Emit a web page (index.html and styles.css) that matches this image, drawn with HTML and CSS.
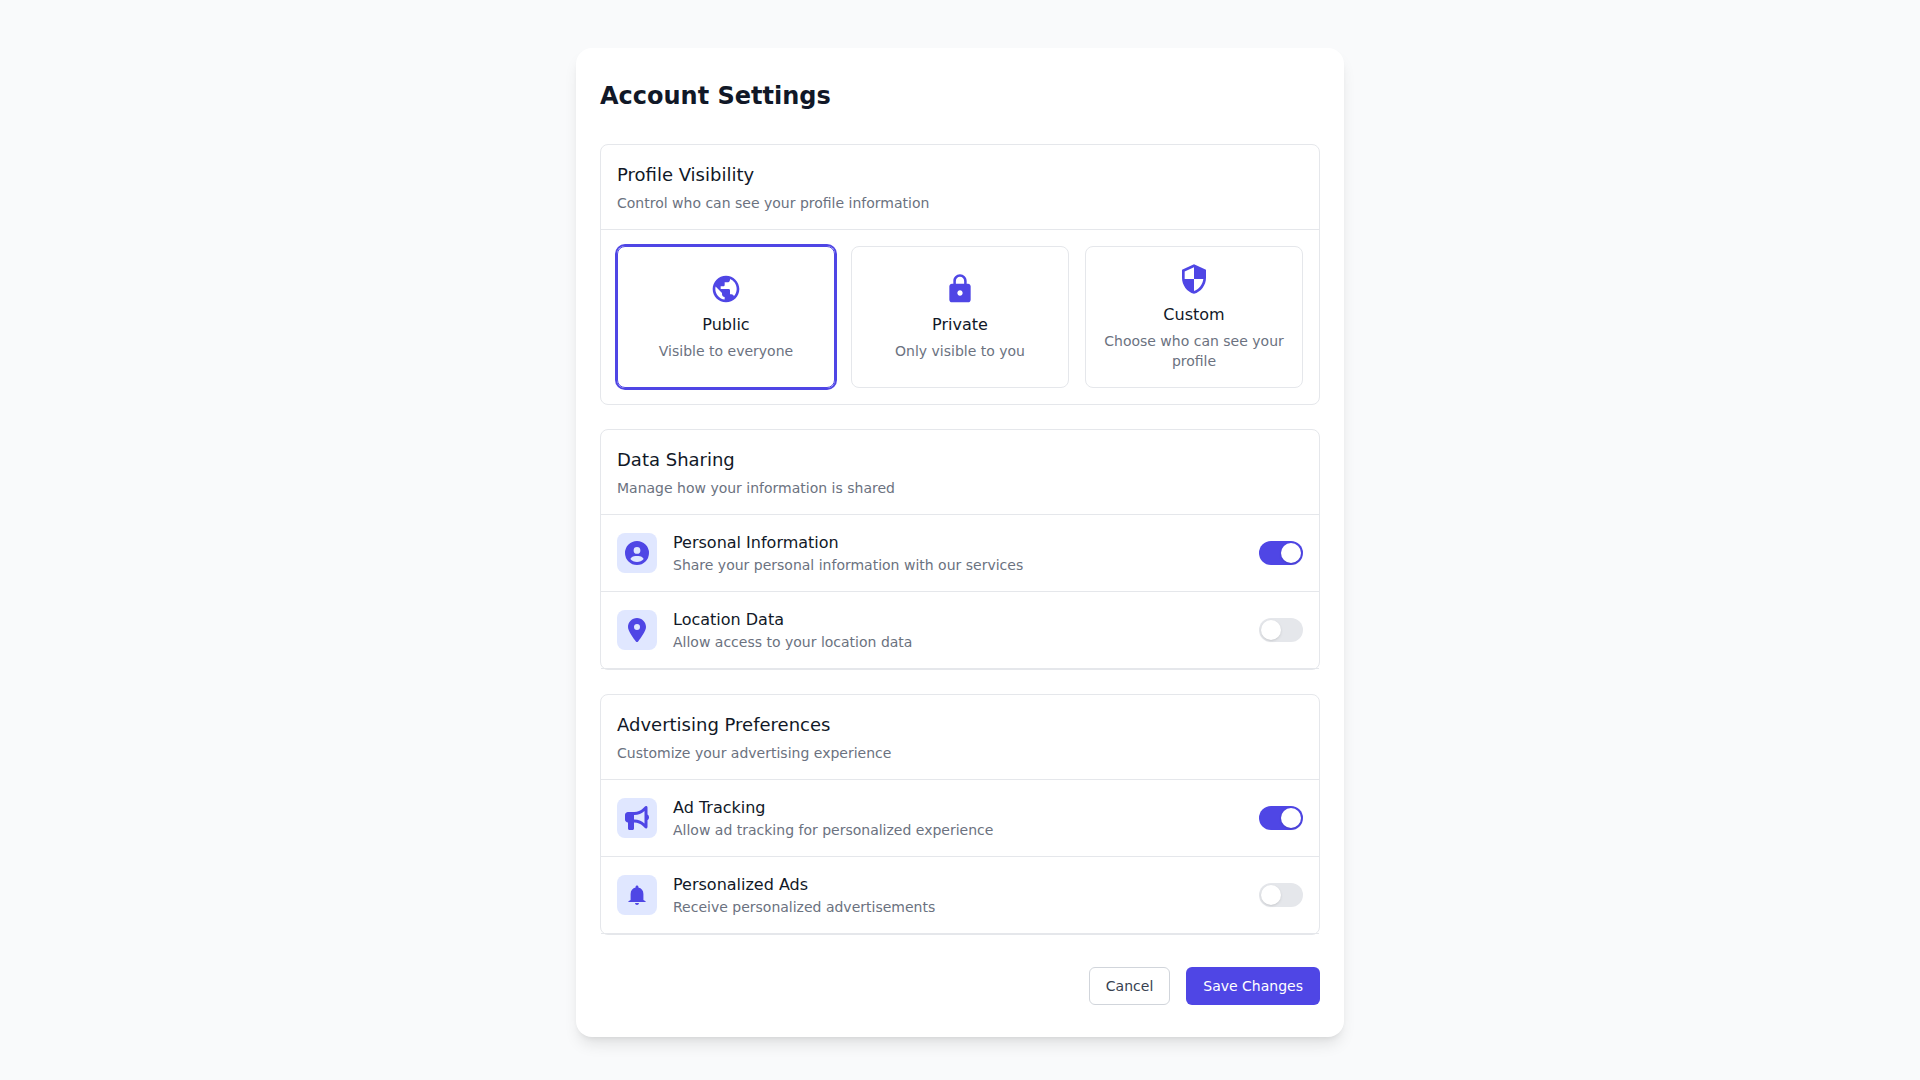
FILE: index.html
```html
<!DOCTYPE html>
<html lang="en">
<head>
    <meta charset="UTF-8">
    <meta name="viewport" content="width=device-width, initial-scale=1.0">
    <title>Account Settings</title>
    <link rel="stylesheet" href="styles.css">
</head>
<body>
    <main class="container">
        <h1>Account Settings</h1>

        <form class="settings">
            <section class="panel">
                <div class="panel-header">
                    <h2>Profile Visibility</h2>
                    <p>Control who can see your profile information</p>
                </div>
                <div class="options">
                    <label class="option">
                        <input type="radio" name="visibility" value="public" checked>
                        <svg viewBox="0 0 24 24"><path d="M12 2C6.48 2 2 6.48 2 12s4.48 10 10 10 10-4.48 10-10S17.52 2 12 2zm-1 17.93c-3.95-.49-7-3.85-7-7.93 0-.62.08-1.21.21-1.79L9 15v1c0 1.1.9 2 2 2v1.93zm6.9-2.54c-.26-.81-1-1.39-1.9-1.39h-1v-3c0-.55-.45-1-1-1H8v-2h2c.55 0 1-.45 1-1V7h2c1.1 0 2-.9 2-2v-.41c2.93 1.19 5 4.06 5 7.41 0 2.08-.8 3.97-2.1 5.39z"/></svg>
                        <span class="option-title">Public</span>
                        <span class="option-text">Visible to everyone</span>
                    </label>
                    <label class="option">
                        <input type="radio" name="visibility" value="private">
                        <svg viewBox="0 0 24 24"><path d="M18 8h-1V6c0-2.76-2.24-5-5-5S7 3.24 7 6v2H6c-1.1 0-2 .9-2 2v10c0 1.1.9 2 2 2h12c1.1 0 2-.9 2-2V10c0-1.1-.9-2-2-2zm-6 9c-1.1 0-2-.9-2-2s.9-2 2-2 2 .9 2 2-.9 2-2 2zm3.1-9H8.9V6c0-1.71 1.39-3.1 3.1-3.1s3.1 1.39 3.1 3.1v2z"/></svg>
                        <span class="option-title">Private</span>
                        <span class="option-text">Only visible to you</span>
                    </label>
                    <label class="option">
                        <input type="radio" name="visibility" value="custom">
                        <svg viewBox="0 0 24 24"><path d="M12 1L3 5v6c0 5.55 3.84 10.74 9 12 5.16-1.26 9-6.45 9-12V5l-9-4zm0 10.99h7c-.53 4.12-3.28 7.79-7 8.94V12H5V6.3l7-3.11v8.8z"/></svg>
                        <span class="option-title">Custom</span>
                        <span class="option-text">Choose who can see your profile</span>
                    </label>
                </div>
            </section>

            <section class="panel">
                <div class="panel-header">
                    <h2>Data Sharing</h2>
                    <p>Manage how your information is shared</p>
                </div>
                <div class="row">
                    <div class="row-icon">
                        <svg viewBox="0 0 512 512"><path d="M399 384.2C376.9 345.8 335.4 320 288 320H224c-47.4 0-88.9 25.8-111 64.2c35.2 39.2 86.2 63.8 143 63.8s107.8-24.7 143-63.8zM0 256a256 256 0 1 1 512 0A256 256 0 1 1 0 256zm256 16a72 72 0 1 0 0-144 72 72 0 1 0 0 144z"/></svg>
                    </div>
                    <label class="row-text" for="personal-info">
                        <span class="row-title">Personal Information</span>
                        <span class="row-desc">Share your personal information with our services</span>
                    </label>
                    <input class="toggle" type="checkbox" id="personal-info" checked>
                </div>
                <div class="row">
                    <div class="row-icon">
                        <svg viewBox="0 0 384 512"><path d="M215.7 499.2C267 435 384 279.4 384 192C384 86 298 0 192 0S0 86 0 192c0 87.4 117 243 168.3 307.2c12.3 15.3 35.1 15.3 47.4 0zM192 128a64 64 0 1 1 0 128 64 64 0 1 1 0-128z"/></svg>
                    </div>
                    <label class="row-text" for="location-data">
                        <span class="row-title">Location Data</span>
                        <span class="row-desc">Allow access to your location data</span>
                    </label>
                    <input class="toggle" type="checkbox" id="location-data">
                </div>
            </section>

            <section class="panel">
                <div class="panel-header">
                    <h2>Advertising Preferences</h2>
                    <p>Customize your advertising experience</p>
                </div>
                <div class="row">
                    <div class="row-icon">
                        <svg viewBox="0 0 512 512"><path d="M480 32c0-12.9-7.8-24.6-19.8-29.6s-25.7-2.2-34.9 6.9L381.7 53c-48 48-113.1 75-181 75H192 160 64c-35.3 0-64 28.7-64 64v96c0 35.3 28.7 64 64 64l0 128c0 17.7 14.3 32 32 32h64c17.7 0 32-14.3 32-32V352l8.7 0c67.9 0 133 27 181 75l43.6 43.6c9.2 9.2 22.9 11.9 34.9 6.9s19.8-16.6 19.8-29.6V300.4c18.6-8.8 32-32.5 32-60.4s-13.4-51.6-32-60.4V32zm-64 76.7V240 371.3C357.2 317.8 280.5 288 200.7 288H192V192h8.7c79.8 0 156.5-29.8 215.3-83.3z"/></svg>
                    </div>
                    <label class="row-text" for="ad-tracking">
                        <span class="row-title">Ad Tracking</span>
                        <span class="row-desc">Allow ad tracking for personalized experience</span>
                    </label>
                    <input class="toggle" type="checkbox" id="ad-tracking" checked>
                </div>
                <div class="row">
                    <div class="row-icon">
                        <svg viewBox="0 0 24 24"><path d="M12 22c1 0 1.900-.8 2-2h-4c.1 1.200 1 2 2 2zM18.400 17v-6c0-3.300-2-5.700-5-6.400V3.800c0-.8-.6-1.400-1.400-1.400s-1.400.6-1.400 1.400v.8c-3 .7-5 3.100-5 6.400v6l-2.200 1.300v.8h17.200v-.8z"/></svg>
                    </div>
                    <label class="row-text" for="personalized-ads">
                        <span class="row-title">Personalized Ads</span>
                        <span class="row-desc">Receive personalized advertisements</span>
                    </label>
                    <input class="toggle" type="checkbox" id="personalized-ads">
                </div>
            </section>

            <div class="actions">
                <button type="button" class="btn btn-cancel">Cancel</button>
                <button type="submit" class="btn btn-save">Save Changes</button>
            </div>
        </form>
    </main>
</body>
</html>
```
FILE: styles.css
```css
* {
    box-sizing: border-box;
    margin: 0;
    padding: 0;
}

body {
    font-family: 'DejaVu Sans', sans-serif;
    font-size: 16px;
    line-height: 24px;
    color: #111827;
    background: #f9fafb;
    min-height: 100vh;
    padding: 48px 16px 40px;
}

.container {
    max-width: 768px;
    margin: 0 auto;
    padding: 32px 24px;
    background: #ffffff;
    border-radius: 16px;
    box-shadow: 0 10px 15px -3px rgba(0, 0, 0, 0.1), 0 4px 6px -4px rgba(0, 0, 0, 0.1);
}

h1 {
    font-size: 24px;
    line-height: 32px;
    font-weight: 700;
    margin-bottom: 32px;
}

.settings {
    display: flex;
    flex-direction: column;
    gap: 24px;
}

.panel {
    border: 1px solid #e5e7eb;
    border-radius: 8px;
}

.panel-header {
    padding: 16px;
    border-bottom: 1px solid #e5e7eb;
}

.panel-header h2 {
    font-size: 18px;
    line-height: 28px;
    font-weight: 500;
    margin-bottom: 4px;
}

.panel-header p,
.option-text,
.row-desc {
    font-size: 14px;
    line-height: 20px;
    color: #6b7280;
}

/* Visibility options */
.options {
    display: grid;
    grid-template-columns: repeat(3, 1fr);
    gap: 16px;
    padding: 16px;
}

.option {
    position: relative;
    display: flex;
    flex-direction: column;
    align-items: center;
    justify-content: center;
    padding: 16px;
    border: 1px solid #e5e7eb;
    border-radius: 8px;
    text-align: center;
    cursor: pointer;
}

.option:has(input:checked) {
    border-color: #4f46e5;
    box-shadow: 0 0 0 2px #4f46e5;
}

.option input {
    position: absolute;
    opacity: 0;
}

.option svg {
    width: 32px;
    height: 32px;
    fill: #4f46e5;
    margin-bottom: 8px;
}

.option-title {
    font-weight: 500;
    margin-bottom: 4px;
}

/* Setting rows */
.row {
    display: flex;
    align-items: center;
    gap: 16px;
    padding: 16px;
    border-bottom: 1px solid #e5e7eb;
}

.row-icon {
    display: flex;
    align-items: center;
    justify-content: center;
    width: 40px;
    height: 40px;
    background: #e0e7ff;
    border-radius: 8px;
}

.row-icon svg {
    width: 24px;
    height: 24px;
    fill: #4f46e5;
}

.row-text {
    flex: 1;
}

.row-title,
.row-desc {
    display: block;
}

.row-title {
    font-weight: 500;
}

/* Toggle switch */
.toggle {
    appearance: none;
    display: flex;
    width: 44px;
    height: 24px;
    padding: 2px;
    background: #e5e7eb;
    border-radius: 12px;
    cursor: pointer;
    transition: background 0.2s ease;
}

.toggle::before {
    content: '';
    width: 20px;
    height: 20px;
    background: #ffffff;
    border-radius: 50%;
    box-shadow: 0 1px 3px rgba(0, 0, 0, 0.1), 0 1px 2px -1px rgba(0, 0, 0, 0.1);
    transition: transform 0.2s ease;
}

.toggle:checked {
    background: #4f46e5;
}

.toggle:checked::before {
    transform: translateX(20px);
}

/* Footer buttons */
.actions {
    display: flex;
    justify-content: flex-end;
    gap: 16px;
    padding-top: 8px;
}

.btn {
    padding: 8px 16px;
    font-family: inherit;
    font-size: 14px;
    line-height: 20px;
    font-weight: 500;
    border: 1px solid transparent;
    border-radius: 6px;
    cursor: pointer;
}

.btn-cancel {
    color: #374151;
    background: #ffffff;
    border-color: #d1d5db;
}

.btn-save {
    color: #ffffff;
    background: #4f46e5;
}

.btn-save:hover {
    background: #4338ca;
}

@media (max-width: 640px) {
    .options {
        grid-template-columns: 1fr;
    }
}
```
